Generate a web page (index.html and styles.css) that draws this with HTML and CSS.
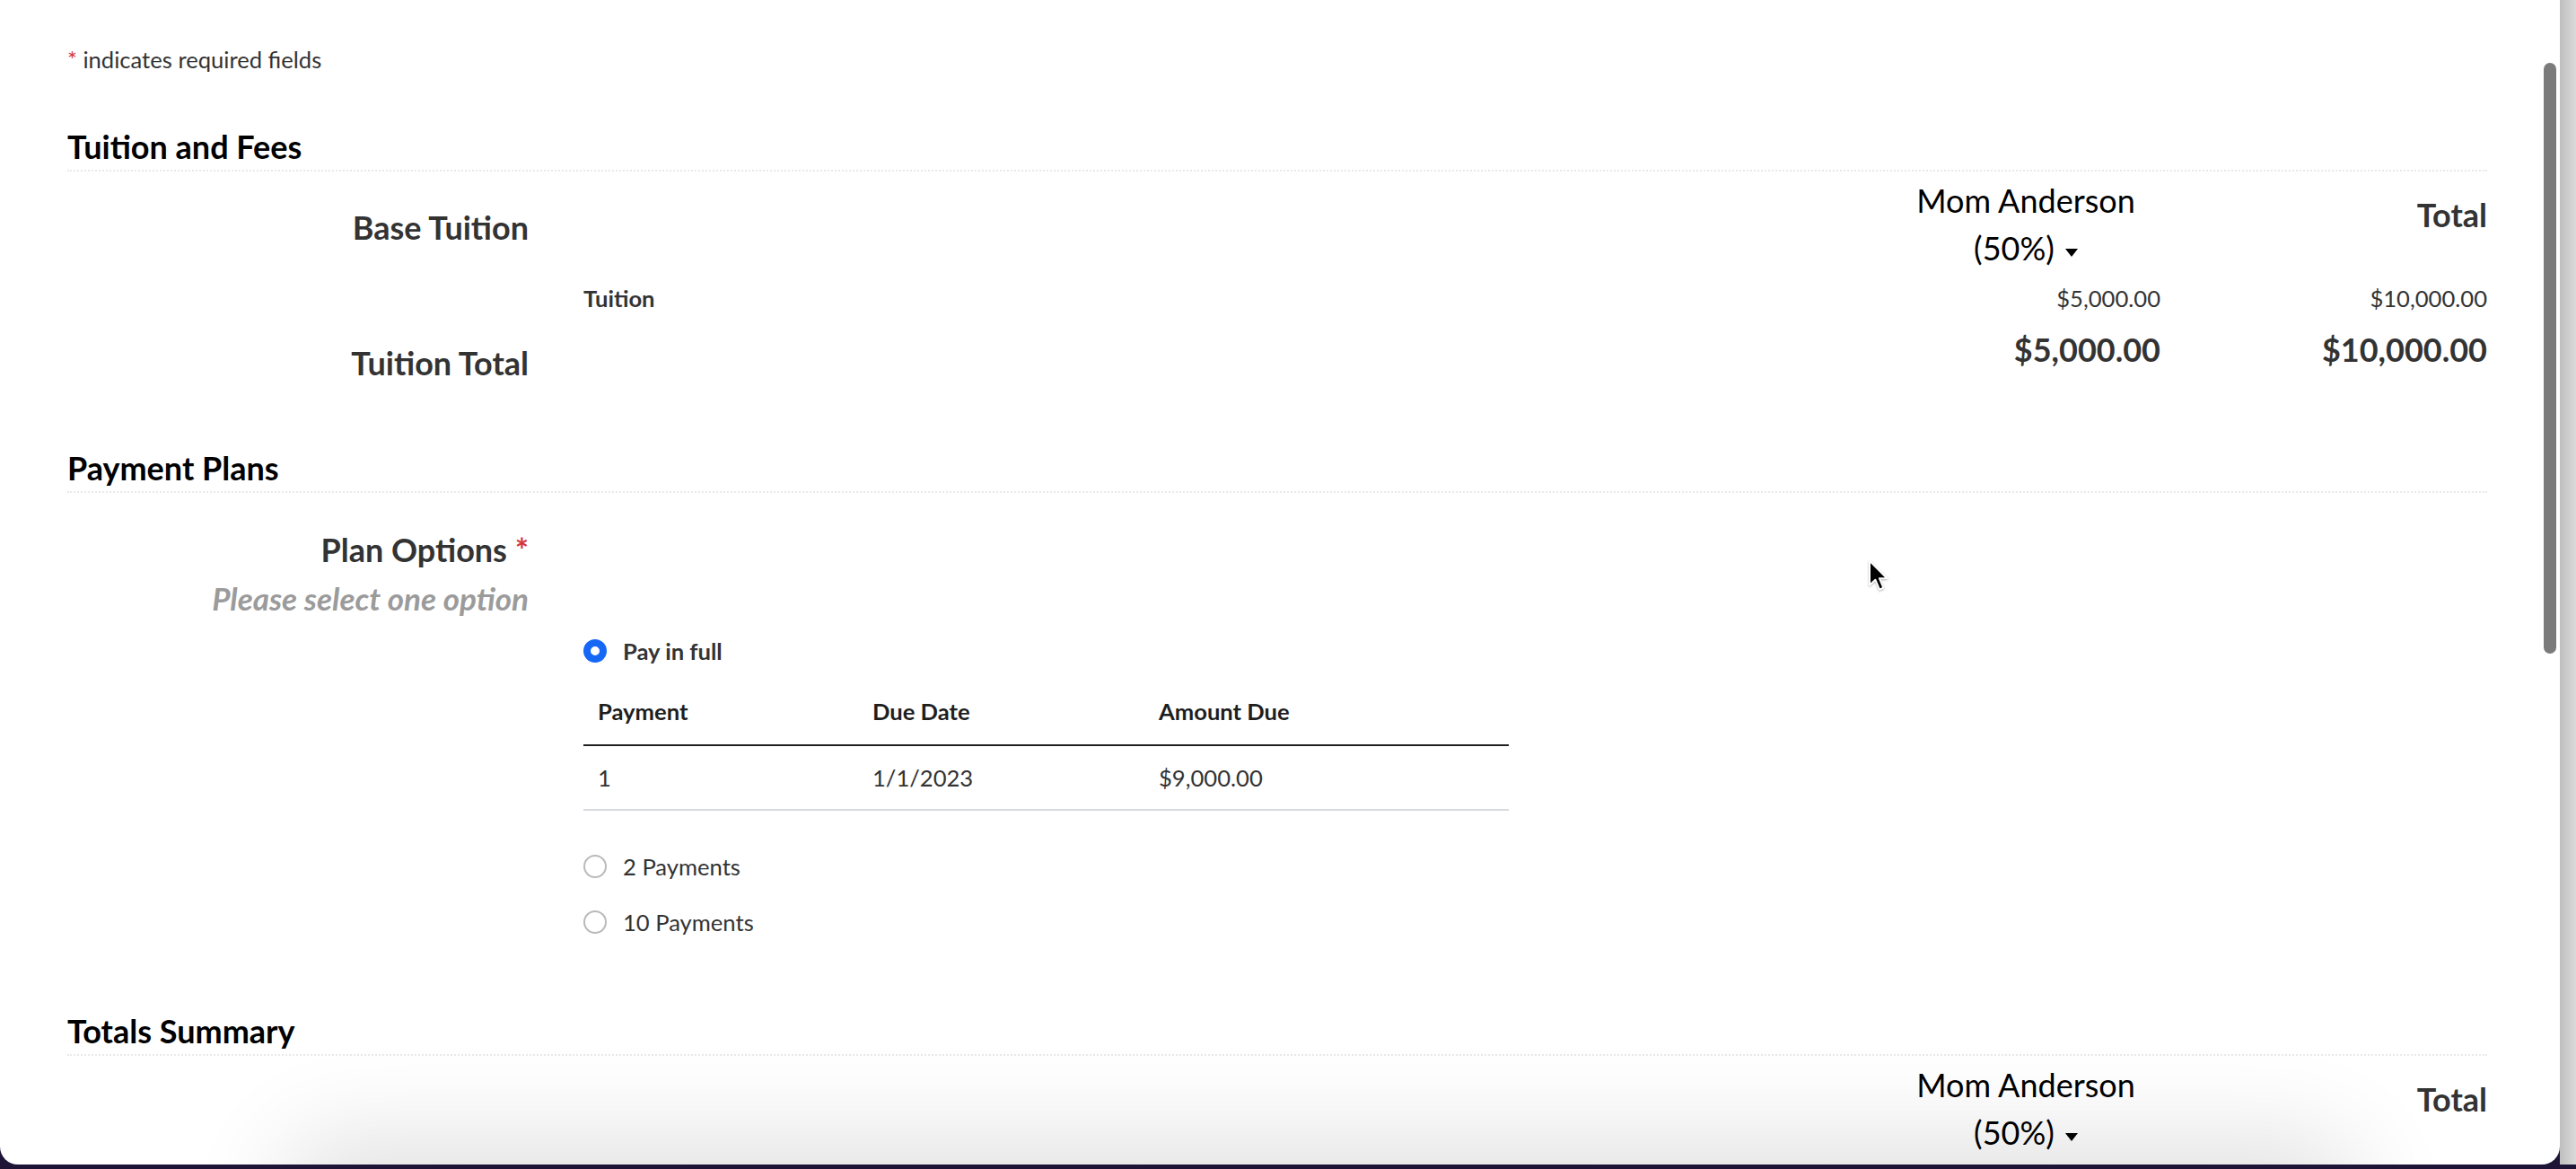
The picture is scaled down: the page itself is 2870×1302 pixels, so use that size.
FILE: index.html
```html
<!DOCTYPE html>
<html lang="en">
<head>
<meta charset="utf-8">
<title>Tuition and Fees</title>
<link rel="stylesheet" href="styles.css">
</head>
<body>
<div class="screen">
  <div class="window">
    <main class="content">
      <p class="req"><span class="ast">*</span> indicates required fields</p>

      <section class="section">
        <h2 class="sec-title">Tuition and Fees</h2>
        <div class="row row-head">
          <div class="label">Base Tuition</div>
          <div></div>
          <div class="payer">Mom Anderson<br><span class="pct">(50%)<span class="caret"></span></span></div>
          <div class="total-head">Total</div>
        </div>
        <div class="row row-item">
          <div></div>
          <div class="item-name">Tuition</div>
          <div class="amt">$5,000.00</div>
          <div class="amt">$10,000.00</div>
        </div>
        <div class="row row-total">
          <div class="label">Tuition Total</div>
          <div></div>
          <div class="amt-big">$5,000.00</div>
          <div class="amt-big">$10,000.00</div>
        </div>
      </section>

      <section class="section">
        <h2 class="sec-title sec-plans">Payment Plans</h2>
        <div class="field">
          <div class="field-label">Plan Options <span class="ast">*</span><br><span class="hint">Please select one option</span></div>
          <div class="options">
            <label class="option selected"><span class="radio checked"></span>Pay in full</label>
            <table class="plan-table">
              <colgroup><col class="c1"><col class="c2"><col class="c3"></colgroup>
              <thead>
                <tr><th>Payment</th><th>Due Date</th><th>Amount Due</th></tr>
              </thead>
              <tbody>
                <tr><td>1</td><td>1/1/2023</td><td>$9,000.00</td></tr>
              </tbody>
            </table>
            <label class="option opt-2"><span class="radio"></span>2 Payments</label>
            <label class="option opt-3"><span class="radio"></span>10 Payments</label>
          </div>
        </div>
      </section>

      <section class="section">
        <h2 class="sec-title sec-totals">Totals Summary</h2>
        <div class="row row-head">
          <div></div>
          <div></div>
          <div class="payer">Mom Anderson<br><span class="pct">(50%)<span class="caret"></span></span></div>
          <div class="total-head">Total</div>
        </div>
      </section>
    </main>

    <div class="scroll-thumb"></div>
    <div class="bottom-shadow"></div>

    <svg class="cursor" width="24" height="36" viewBox="0 0 14 21" aria-hidden="true">
      <path d="M1.2 1 L1.2 16.6 L4.9 13.2 L7.6 19.6 L10.1 18.5 L7.5 12.3 L12.4 12.3 Z" fill="#000" stroke="#fff" stroke-width="1.1" stroke-linejoin="round"/>
    </svg>
  </div>
  <div class="side"></div>
</div>
</body>
</html>
```

FILE: styles.css
```css
* { box-sizing: border-box; }

html, body {
  margin: 0;
  padding: 0;
}

body {
  width: 2870px;
  height: 1302px;
  overflow: hidden;
  background: #1d1436;
  font-family: Lato, "Liberation Sans", sans-serif;
}

.screen {
  display: flex;
  height: 1297px;
}

.window {
  position: relative;
  width: 2852px;
  height: 1297px;
  background: #fff;
  border-radius: 0 0 20px 20px;
  overflow: hidden;
}

.side {
  width: 18px;
  background: linear-gradient(90deg, #bfbfbf, #dadada);
}

.content {
  padding: 48px 81px 0 75px;
}

.req {
  margin: 0;
  font-size: 25.6px;
  line-height: 36px;
  color: #333;
}

.ast {
  color: #d4363c;
}

.sec-title {
  margin: 57px 0 0;
  padding-bottom: 4px;
  font-size: 36px;
  line-height: 44px;
  font-weight: 700;
  color: #000;
  border-bottom: 2px dotted #e9e9e9;
}

.sec-plans { margin-top: 73px; }
.sec-totals { margin-top: 81px; }

.row {
  display: grid;
  grid-template-columns: 514px 1fr 300px 364px;
  align-items: start;
}

.label {
  font-size: 36px;
  line-height: 44px;
  font-weight: 700;
  color: #333;
  text-align: right;
}

.row-head { margin-top: 6px; }
.row-head .label { margin-top: 34px; }

.payer {
  font-size: 36px;
  line-height: 53px;
  color: #000;
  text-align: center;
}

.caret {
  display: inline-block;
  width: 0;
  height: 0;
  margin-left: 12px;
  border-left: 7px solid transparent;
  border-right: 7px solid transparent;
  border-top: 9px solid #000;
  vertical-align: 4px;
}

.total-head {
  margin-top: 20px;
  font-size: 36px;
  line-height: 44px;
  font-weight: 700;
  color: #333;
  text-align: right;
}

.row-item { margin-top: 11px; }

.item-name {
  padding-left: 61px;
  font-size: 25.6px;
  line-height: 36px;
  font-weight: 700;
  color: #333;
}

.amt {
  font-size: 25.6px;
  line-height: 36px;
  color: #333;
  text-align: right;
}

.row-total { margin-top: 17px; }
.row-total .label { margin-top: 15px; }

.amt-big {
  font-size: 36px;
  line-height: 44px;
  font-weight: 700;
  color: #333;
  text-align: right;
}

.field { margin-top: 36px; }

.field-label {
  width: 514px;
  text-align: right;
  font-size: 36px;
  line-height: 54px;
  font-weight: 700;
  color: #333;
}

.hint {
  font-size: 35px;
  font-style: italic;
  color: #9b9b9b;
}

.options {
  display: flex;
  flex-direction: column;
  align-items: flex-start;
  margin: 14px 0 0 575px;
}

.option {
  display: flex;
  align-items: center;
  gap: 18px;
  font-size: 25.6px;
  line-height: 36px;
  color: #333;
}

.option.selected { font-weight: 700; }

.radio {
  width: 26px;
  height: 26px;
  border-radius: 50%;
  border: 2px solid #bababa;
  background: #fff;
}

.radio.checked {
  border: 8px solid #1667f6;
}

.plan-table {
  margin-top: 15px;
  width: 1031px;
  border-collapse: collapse;
}

.plan-table .c1 { width: 306px; }
.plan-table .c2 { width: 319px; }
.plan-table .c3 { width: 406px; }

.plan-table th {
  padding: 16px 16px 19px;
  text-align: left;
  font-size: 25.6px;
  line-height: 36px;
  font-weight: 700;
  color: #1e1e1e;
  border-bottom: 2px solid #222;
}

.plan-table td {
  padding: 17px 16px;
  font-size: 25.6px;
  line-height: 36px;
  color: #333;
  border-bottom: 2px solid #d7dbdf;
}

.opt-2 { margin-top: 44px; }
.opt-3 { margin-top: 26px; }

.scroll-thumb {
  position: absolute;
  left: 2834px;
  top: 70px;
  width: 14px;
  height: 658px;
  border-radius: 7px;
  background: #7b7b7b;
}

.bottom-shadow {
  position: absolute;
  left: 340px;
  right: 250px;
  bottom: -80px;
  height: 80px;
  border-radius: 40px;
  box-shadow: 0 0 110px 30px rgba(0, 0, 0, 0.12);
}

.cursor {
  position: absolute;
  left: 2081px;
  top: 623px;
  filter: drop-shadow(0 1px 1px rgba(0, 0, 0, 0.3));
}
```
